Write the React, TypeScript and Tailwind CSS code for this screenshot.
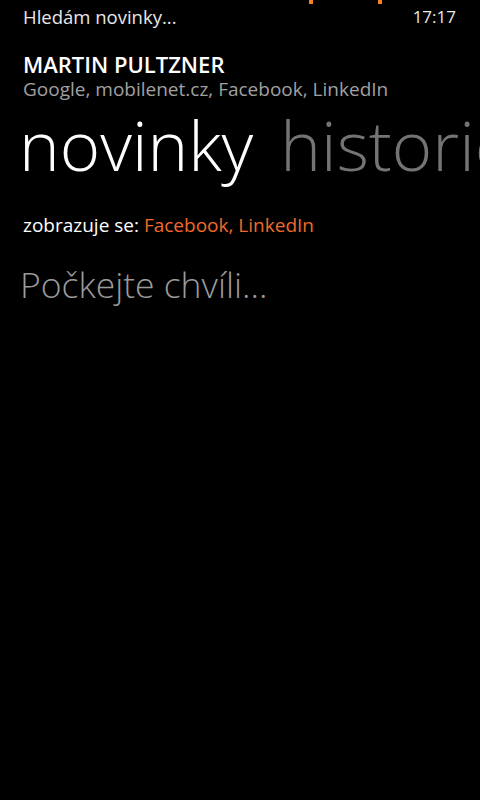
import React from "react";

export default function App() {
  const font = { fontFamily: '"Open Sans", "Noto Sans", sans-serif' };
  return (
    <div className="relative w-[480px] h-[800px] bg-black overflow-hidden text-white" style={font}>
      <div className="absolute top-0 left-[309px] w-[4px] h-[4px] bg-[#f7811e]" />
      <div className="absolute top-0 left-[378px] w-[4px] h-[4px] bg-[#f7811e]" />
      <div className="flex justify-between items-center h-[34px] pl-[23px] pr-[24px] text-[18.5px] text-[#e8e8e8]">
        <span>Hledám novinky...</span>
        <span className="text-[17px]">17:17</span>
      </div>
      <div className="pl-[23px] pt-[17px]">
        <div className="text-[22px] font-semibold leading-[26px]">MARTIN PULTZNER</div>
        <div className="text-[19px] leading-[24px] text-[#a0a0a0]">Google, mobilenet.cz, Facebook, LinkedIn</div>
      </div>
      <div className="flex whitespace-nowrap pl-[19px] text-[69px] font-light leading-[86px]">
        <span className="text-white">novinky</span>
        <span className="ml-[27px] text-[#747474]">historie</span>
      </div>
      <div className="pl-[23px] mt-[26px] text-[19px] leading-[24px]">
        <span className="text-white">zobrazuje se: </span>
        <span className="text-[#ef6b2b]">Facebook, LinkedIn</span>
      </div>
      <div className="pl-[20px] mt-[25px] text-[35.5px] font-light leading-[44px] text-[#9a9a9a]">Počkejte chvíli...</div>
    </div>
  );
}
